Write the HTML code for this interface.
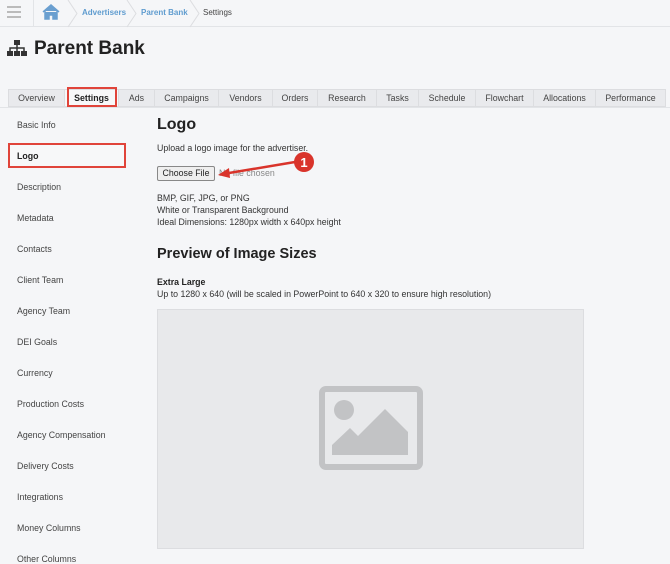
<!DOCTYPE html>
<html><head><meta charset="utf-8"><style>
*{margin:0;padding:0;box-sizing:border-box}
body{width:670px;height:564px;overflow:hidden;background:#f5f6f8;font-family:"Liberation Sans",sans-serif;color:#333;position:relative}
.abs{position:absolute;white-space:nowrap}
.top{position:absolute;left:0;top:0;width:670px;height:27px;background:#f5f6f8;border-bottom:1px solid #e2e4e7}
.crumb{font-size:8px;top:8px}
.tab{position:absolute;top:89px;height:18px;border:1px solid #dcdde0;background:#e9eaed;font-size:8.8px;text-align:center;line-height:17px;color:#444}
.side{position:absolute;left:17px;font-size:8.8px;color:#444}
.t{font-size:8.8px}
</style></head><body>
<div class="top"></div>
<div class="abs" style="left:7px;top:6px;width:14px;height:2px;background:#bbb;box-shadow:0 5px 0 #bbb,0 10px 0 #bbb"></div>
<div class="abs" style="left:33px;top:0;width:1px;height:27px;background:#e2e4e7"></div>
<svg class="abs" style="left:0;top:0" width="250" height="28">
<path d="M43 12 L51 5 L59 12 M45 11 V19 H49 V15 H53 V19 H57 V11" fill="#6a9fd0" stroke="#6a9fd0" stroke-width="1.5"/>
<polyline points="68,0 77,13.5 68,27" fill="none" stroke="#dcdde0"/>
<polyline points="127,0 136,13.5 127,27" fill="none" stroke="#dcdde0"/>
<polyline points="190,0 199,13.5 190,27" fill="none" stroke="#dcdde0"/>
</svg>
<div class="abs crumb" style="left:82px;color:#5f9ccf;font-weight:bold">Advertisers</div>
<div class="abs crumb" style="left:141px;color:#5f9ccf;font-weight:bold">Parent Bank</div>
<div class="abs crumb" style="left:203px;color:#444">Settings</div>
<svg class="abs" style="left:7px;top:40px" width="20" height="17">
<rect x="7" y="0" width="6" height="5" fill="#333"/><rect x="0" y="11" width="6" height="5" fill="#333"/><rect x="7" y="11" width="6" height="5" fill="#333"/><rect x="14" y="11" width="6" height="5" fill="#333"/>
<path d="M10 5V11M3 11V8H17V11" stroke="#333" stroke-width="1.5" fill="none"/></svg>
<div class="abs" style="left:34px;top:38px;font-size:19px;font-weight:bold;color:#222">Parent Bank</div>
<div class="abs" style="left:0;top:107px;width:670px;height:1px;background:#e2e4e7"></div>
<div class="tab" style="left:8px;width:57px">Overview</div>
<div class="tab" style="left:64px;width:55px;background:#f7f8f9;font-weight:bold;color:#222">Settings</div>
<div class="abs" style="left:67px;top:87px;width:50px;height:20px;border:2px solid #e0443a"></div>
<div class="tab" style="left:118px;width:37px">Ads</div>
<div class="tab" style="left:154px;width:65px">Campaigns</div>
<div class="tab" style="left:218px;width:55px">Vendors</div>
<div class="tab" style="left:272px;width:46px">Orders</div>
<div class="tab" style="left:317px;width:60px">Research</div>
<div class="tab" style="left:376px;width:43px">Tasks</div>
<div class="tab" style="left:418px;width:58px">Schedule</div>
<div class="tab" style="left:475px;width:59px">Flowchart</div>
<div class="tab" style="left:533px;width:63px">Allocations</div>
<div class="tab" style="left:595px;width:71px">Performance</div>
<div class="side" style="top:120px">Basic Info</div>
<div class="abs" style="left:8px;top:143px;width:118px;height:25px;border:2px solid #e0443a;background:#f7f8f9"></div>
<div class="side" style="top:151px;font-weight:bold;color:#222">Logo</div>
<div class="side" style="top:182px">Description</div>
<div class="side" style="top:213px">Metadata</div>
<div class="side" style="top:244px">Contacts</div>
<div class="side" style="top:275px">Client Team</div>
<div class="side" style="top:306px">Agency Team</div>
<div class="side" style="top:337px">DEI Goals</div>
<div class="side" style="top:368px">Currency</div>
<div class="side" style="top:399px">Production Costs</div>
<div class="side" style="top:430px">Agency Compensation</div>
<div class="side" style="top:461px">Delivery Costs</div>
<div class="side" style="top:492px">Integrations</div>
<div class="side" style="top:523px">Money Columns</div>
<div class="side" style="top:554px">Other Columns</div>
<div class="abs" style="left:157px;top:116px;font-size:16px;font-weight:bold;color:#222">Logo</div>
<div class="abs t" style="left:157px;top:143px">Upload a logo image for the advertiser.</div>
<div class="abs" style="left:157px;top:166px;width:58px;height:15px;border:1px solid #888;background:#efefef;font-size:8.8px;line-height:13px;text-align:center;color:#222;border-radius:2px">Choose File</div>
<div class="abs t" style="left:219px;top:168px;color:#888">No file chosen</div>
<svg class="abs" style="left:215px;top:150px" width="105" height="35">
<line x1="80" y1="12" x2="8" y2="24" stroke="#d9342b" stroke-width="2.5"/>
<polygon points="3,25 14,18 15,28" fill="#d9342b"/>
<circle cx="89" cy="12" r="10" fill="#d9342b"/>
<text x="89" y="17" font-size="13" font-family="Liberation Sans" fill="#fff" text-anchor="middle" font-weight="bold">1</text>
</svg>
<div class="abs t" style="left:157px;top:192px;line-height:12px">BMP, GIF, JPG, or PNG<br>White or Transparent Background<br>Ideal Dimensions: 1280px width x 640px height</div>
<div class="abs" style="left:157px;top:246px;font-size:14.5px;font-weight:bold;color:#222">Preview of Image Sizes</div>
<div class="abs t" style="left:157px;top:277px;font-weight:bold;color:#222">Extra Large</div>
<div class="abs t" style="left:157px;top:289px">Up to 1280 x 640 (will be scaled in PowerPoint to 640 x 320 to ensure high resolution)</div>
<div class="abs" style="left:157px;top:309px;width:427px;height:240px;background:#e8e9eb;border:1px solid #dcdde0"></div>
<svg class="abs" style="left:318px;top:385px" width="106" height="86">
<rect x="4" y="4" width="98" height="78" rx="4" fill="none" stroke="#c2c3c5" stroke-width="6"/>
<circle cx="26" cy="25" r="10" fill="#c2c3c5"/>
<polygon points="14,70 14,60 32,43 40,51 67,24 90,47 90,70" fill="#c2c3c5"/>
</svg>
</body></html>
